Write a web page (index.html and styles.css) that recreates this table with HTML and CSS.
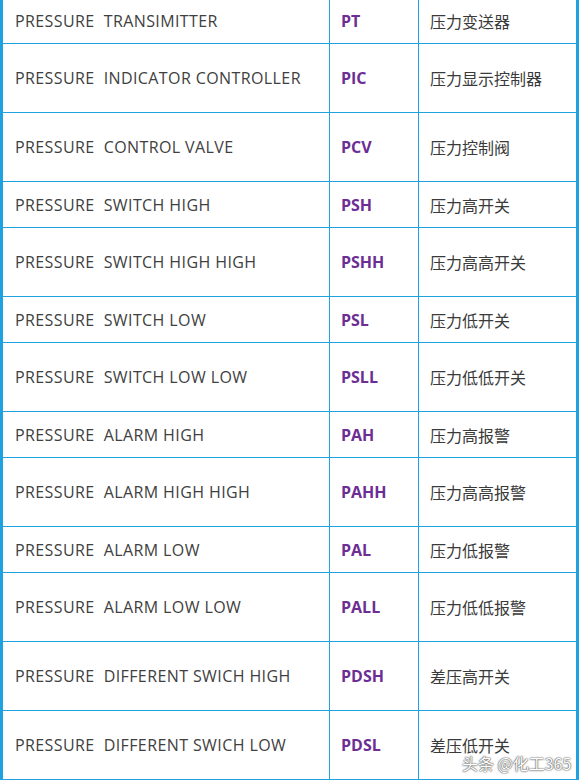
FILE: index.html
```html
<!DOCTYPE html>
<html>
<head>
<meta charset="utf-8">
<link rel="stylesheet" href="styles.css">
</head>
<body>
<div class="sheet">
  <div class="table">
    <div class="row short"><div class="c name">PRESSURE&nbsp; TRANSIMITTER</div><div class="c code">PT</div><div class="c zh">压力变送器</div></div>
    <div class="row tall"><div class="c name">PRESSURE&nbsp; INDICATOR CONTROLLER</div><div class="c code">PIC</div><div class="c zh">压力显示控制器</div></div>
    <div class="row tall"><div class="c name">PRESSURE&nbsp; CONTROL VALVE</div><div class="c code">PCV</div><div class="c zh">压力控制阀</div></div>
    <div class="row short"><div class="c name">PRESSURE&nbsp; SWITCH HIGH</div><div class="c code">PSH</div><div class="c zh">压力高开关</div></div>
    <div class="row tall"><div class="c name">PRESSURE&nbsp; SWITCH HIGH HIGH</div><div class="c code">PSHH</div><div class="c zh">压力高高开关</div></div>
    <div class="row short"><div class="c name">PRESSURE&nbsp; SWITCH LOW</div><div class="c code">PSL</div><div class="c zh">压力低开关</div></div>
    <div class="row tall"><div class="c name">PRESSURE&nbsp; SWITCH LOW LOW</div><div class="c code">PSLL</div><div class="c zh">压力低低开关</div></div>
    <div class="row short"><div class="c name">PRESSURE&nbsp; ALARM HIGH</div><div class="c code">PAH</div><div class="c zh">压力高报警</div></div>
    <div class="row tall"><div class="c name">PRESSURE&nbsp; ALARM HIGH HIGH</div><div class="c code">PAHH</div><div class="c zh">压力高高报警</div></div>
    <div class="row short"><div class="c name">PRESSURE&nbsp; ALARM LOW</div><div class="c code">PAL</div><div class="c zh">压力低报警</div></div>
    <div class="row tall"><div class="c name">PRESSURE&nbsp; ALARM LOW LOW</div><div class="c code">PALL</div><div class="c zh">压力低低报警</div></div>
    <div class="row tall"><div class="c name">PRESSURE&nbsp; DIFFERENT SWICH HIGH</div><div class="c code">PDSH</div><div class="c zh">差压高开关</div></div>
    <div class="row tall"><div class="c name">PRESSURE&nbsp; DIFFERENT SWICH LOW</div><div class="c code">PDSL</div><div class="c zh">差压低开关</div></div>
  </div>
  <div class="watermark">头条 @化工365</div>
</div>
</body>
</html>
```
FILE: styles.css
```css
html, body {
  margin: 0;
  padding: 0;
  background: #ffffff;
  overflow: hidden;
}
.sheet {
  position: relative;
  width: 581px;
  height: 780px;
  overflow: hidden;
}
.table {
  width: 573px;
  margin-top: -2px;
  border-left: 3px solid #1fa3e0;
  border-right: 3px solid #1fa3e0;
}
.row {
  display: grid;
  grid-template-columns: 327px 89px 157px;
}
.row.short { height: 46px; }
.row.tall { height: 69px; }
.c {
  box-sizing: border-box;
  border-bottom: 1px solid #1fa3e0;
  display: flex;
  align-items: center;
  color: #404040;
  font-family: "Open Sans", "Noto Sans CJK SC", sans-serif;
  font-size: 16px;
}
.name {
  border-right: 1px solid #1fa3e0;
  padding-left: 12px;
  letter-spacing: 0.4px;
}
.code {
  border-right: 1px solid #1fa3e0;
  padding-left: 11px;
  color: #6c2e94;
  font-weight: bold;
}
.zh {
  padding-left: 11px;
  font-family: "Noto Sans CJK SC", sans-serif;
  font-size: 16px;
  color: #3a3a3a;
}
.watermark {
  position: absolute;
  left: 462px;
  top: 752px;
  white-space: nowrap;
  font-family: "Noto Sans CJK SC", sans-serif;
  font-size: 16px;
  line-height: 22px;
  color: #ffffff;
  text-shadow: 0 0 2px #444, 0 0 1px #333;
}
```
